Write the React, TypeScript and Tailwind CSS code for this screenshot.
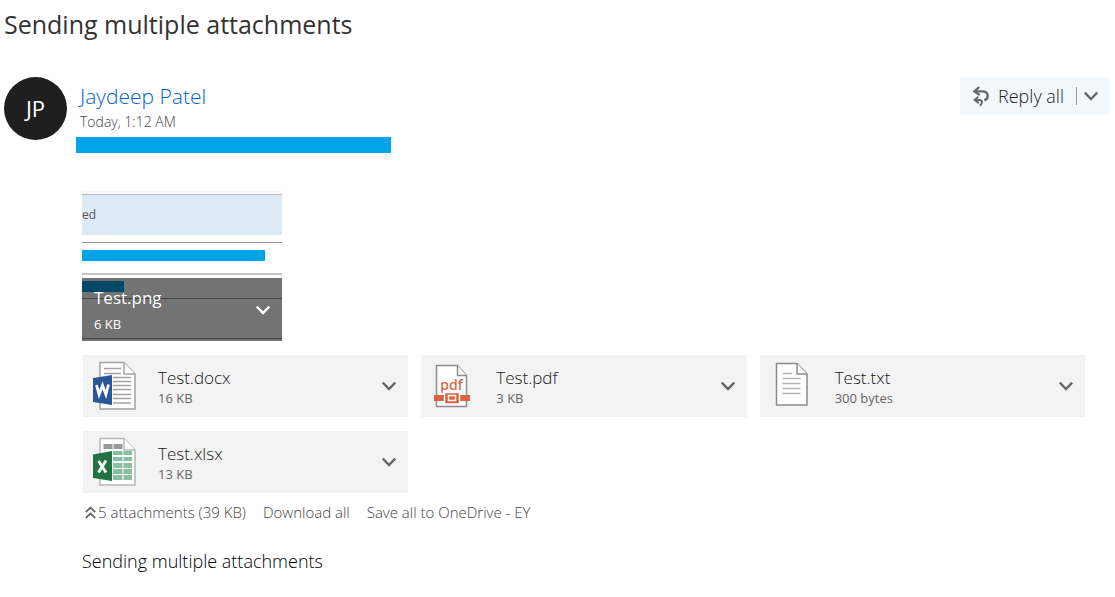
import type { ReactNode } from "react";

interface Attachment {
	name: string;
	size: string;
	icon: ReactNode;
}

function Chevron({ className = "" }: { className?: string }) {
	return (
		<svg width="14" height="10" viewBox="0 0 14 10" fill="none" className={className} aria-hidden="true">
			<path d="M.8 1.5 7 8 13.2 1.5" stroke="currentColor" strokeWidth="2.4" />
		</svg>
	);
}

function ReplyAllIcon() {
	return (
		<svg width="18" height="22" viewBox="0 0 18 22" fill="none" stroke="#666" aria-hidden="true">
			<path d="M3 6.4h7.6c6.2 0 6.6 6.8 1.8 9" strokeWidth="2.4" />
			<path d="M7.2 2 2.4 6.4l5.4 3.8" strokeWidth="2.2" />
			<path d="M3 15h4.4c3.2 0 3.4 3.6.4 5.8" strokeWidth="2" />
			<path d="M6.4 11.6 2.6 15l4.2 3.2" strokeWidth="1.8" />
		</svg>
	);
}

function DoubleUpIcon() {
	return (
		<svg width="11" height="13" viewBox="0 0 11 13" fill="none" stroke="#666" strokeWidth="1.8" aria-hidden="true">
			<path d="M.8 6.2 5.5 1.6l4.7 4.6M.8 12l4.7-4.6 4.7 4.6" />
		</svg>
	);
}

function WordIcon() {
	return (
		<svg width="46" height="50" viewBox="0 0 46 50" aria-hidden="true">
			<path d="M8 1.5h24L43 13v35H8z" fill="#fff" stroke="#a3a3a3" strokeWidth="1.5" />
			<path d="M32 1.5V13h11" fill="#fff" stroke="#a3a3a3" strokeWidth="1.5" />
			<path
				d="M12 7.5h17M12 12.5h17M21 16.5h18M21 20.5h18M21 24.5h18M21 28.5h18M21 33.5h18M21 37.5h18M21 42h18"
				stroke="#a3a3a3"
				strokeWidth="1.4"
			/>
			<path d="M1 17 20 14v30L1 41z" fill="#2b579a" />
			<path d="m4.5 24 2.6 9.5 3.4-9 3.4 9 2.6-10" fill="none" stroke="#fff" strokeWidth="2.8" />
		</svg>
	);
}

function ExcelIcon() {
	return (
		<svg width="46" height="50" viewBox="0 0 46 50" aria-hidden="true">
			<path d="M8 1.5h24l11 11.5v35H8z" fill="#fff" stroke="#b8b8b8" strokeWidth="1.5" />
			<path d="M32 1.5V13h11" fill="#fff" stroke="#b8b8b8" strokeWidth="1.5" />
			<path d="M11.5 7h9v5h-9zM21.5 7h9v5h-9z" fill="#999" />
			<path
				d="M21 14h9.5v4H21zM21 20h9.5v4H21zM21 26h9.5v5H21zM21 32h9.5v5H21zM21 38h9.5v5H21zM31.5 14h8.5v4h-8.5zM31.5 20h8.5v4h-8.5zM31.5 26h8.5v5h-8.5zM31.5 32h8.5v5h-8.5zM31.5 38h8.5v5h-8.5z"
				fill="#86c0a1"
			/>
			<path d="M1 17.5 20 14v30L1 41z" fill="#217346" />
			<path d="m6.5 24 7.5 11.5M14 23.5 6.5 35.5" fill="none" stroke="#fff" strokeWidth="2.8" />
		</svg>
	);
}

function PdfIcon() {
	return (
		<svg width="38" height="45" viewBox="0 0 38 45" aria-hidden="true">
			<path d="M2.5 1.5h21l9 10v31h-30z" fill="#fff" stroke="#8c8c8c" strokeWidth="1.5" />
			<path d="M23.5 1.5v10h9" fill="#fff" stroke="#8c8c8c" strokeWidth="1.5" />
			<text
				x="17.5"
				y="26"
				textAnchor="middle"
				fill="#dc6141"
				fontSize="14"
				fontWeight="500"
				fontFamily="'Noto Sans', sans-serif"
			>
				pdf
			</text>
			<path d="M0 31h36v6H0z" fill="#dc6141" />
			<path d="M10.5 28.5h15v11.5h-15z" fill="#dc6141" stroke="#fff" strokeWidth="1.5" />
			<path d="M14.5 31.5h7v5h-7z" fill="#dc6141" stroke="#fff" strokeWidth="1.5" />
		</svg>
	);
}

function TextIcon() {
	return (
		<svg width="34" height="48" viewBox="0 0 34 48" aria-hidden="true">
			<path d="M2.5 1.5H23l10 10.5v31H2.5z" fill="#fff" stroke="#8c8c8c" strokeWidth="1.5" />
			<path d="M23 1.5V12h10" fill="#fff" stroke="#8c8c8c" strokeWidth="1.5" />
			<path d="M8.5 11.5H18M8.5 16.5h18M8.5 21.5h18M8.5 26.5h18M8.5 31.5h18" stroke="#b5b5b5" strokeWidth="1.4" />
		</svg>
	);
}

const attachments: Attachment[] = [
	{ name: "Test.docx", size: "16 KB", icon: <WordIcon /> },
	{ name: "Test.pdf", size: "3 KB", icon: <PdfIcon /> },
	{ name: "Test.txt", size: "300 bytes", icon: <TextIcon /> },
	{ name: "Test.xlsx", size: "13 KB", icon: <ExcelIcon /> },
];

function AttachmentCard({ name, size, icon }: Attachment) {
	return (
		<li className="flex items-center h-[62px] bg-[#f3f3f3]">
			<div className="w-[75px] pr-3 flex justify-center shrink-0">{icon}</div>
			<div className="flex-1 min-w-0">
				<div className="text-[17px] leading-6 font-light text-[#212121]">{name}</div>
				<div className="text-[13px] leading-4 text-[#666]">{size}</div>
			</div>
			<button type="button" aria-label={`More actions for ${name}`} className="px-3 self-stretch text-[#666]">
				<Chevron />
			</button>
		</li>
	);
}

function ImagePreview() {
	return (
		<div className="relative w-[200px] h-[150px] overflow-hidden bg-white">
			{/* Preview */}
			<div className="h-[3px] bg-[#f8f8f8]"></div>
			<div className="h-[41px] flex items-center border-t border-[#b4bac6] bg-[#dde9f5] text-xs font-medium text-[#555]">
				ed
			</div>
			<div className="mt-[7px] pt-[7px] border-t border-[#999]">
				<div className="w-[183px] h-[11px] bg-[#00a2e8]"></div>
			</div>
			<div className="mt-3 border-t-2 border-[#c4c4c4]"></div>
			<div className="mt-[6px] w-[42px] h-[11px] bg-[#00a2e8]"></div>
			<div className="mt-[6px] h-[41px] border-y border-[#999]"></div>
			{/* File name bar */}
			<div className="absolute inset-x-0 bottom-0 h-[63px] pl-3 flex items-center bg-black/55 text-white">
				<div className="flex-1">
					<div className="text-[17px] leading-6">Test.png</div>
					<div className="mt-1 text-[13px] leading-5">6 KB</div>
				</div>
				<button type="button" aria-label="More actions for Test.png" className="px-3 self-stretch">
					<Chevron />
				</button>
			</div>
		</div>
	);
}

export default function App() {
	return (
		<main className="bg-white pb-6 font-['Open_Sans','Noto_Sans',sans-serif] text-[#333]">
			<h1 className="pl-1 pt-1 text-[25px] leading-10">Sending multiple attachments</h1>

			{/* Sender */}
			<header className="mt-[33px] pl-1 pr-[6px] flex items-start">
				<div className="size-[63px] shrink-0 rounded-full bg-[#1f1f1f] flex items-center justify-center text-[22px] text-white">
					JP
				</div>
				<div className="ml-[9px] flex-1">
					<a href="#sender" className="block w-fit pl-1 pt-[3px] text-[21px] leading-8 font-light text-[#0563c9]">
						Jaydeep Patel
					</a>
					<div className="pl-1 text-sm leading-5 font-light text-[#444]">Today, 1:12 AM</div>
					<div className="mt-[5px] h-4 w-[315px] bg-[#00a2e8]"></div>
				</div>
				<div className="flex items-center h-[38px] bg-[#f2f8fd]">
					<button type="button" className="flex items-center gap-2 pl-3 pr-3 text-lg font-light text-[#212121]">
						<ReplyAllIcon />
						Reply all
					</button>
					<div className="w-px h-[18px] bg-[#999]"></div>
					<button type="button" aria-label="More reply options" className="pl-[7px] pr-[11px] text-[#666]">
						<Chevron />
					</button>
				</div>
			</header>

			{/* Attachments */}
			<section className="mt-[38px] pl-[82px] pr-[30px]">
				<ImagePreview />
				<ul className="mt-[14px] pl-px grid grid-cols-3 gap-x-[13px] gap-y-[14px]">
					{attachments.map((attachment) => (
						<AttachmentCard key={attachment.name} {...attachment} />
					))}
				</ul>
				<div className="mt-2 pl-[3px] flex items-center gap-[17px] text-[15px] leading-[22px] font-light text-[#444]">
					<button type="button" className="flex items-center gap-[2px]">
						<DoubleUpIcon />5 attachments (39 KB)
					</button>
					<button type="button">Download all</button>
					<button type="button">Save all to OneDrive - EY</button>
				</div>
			</section>

			<p className="mt-6 pl-[82px] text-lg leading-7 font-light text-black">Sending multiple attachments</p>
		</main>
	);
}
